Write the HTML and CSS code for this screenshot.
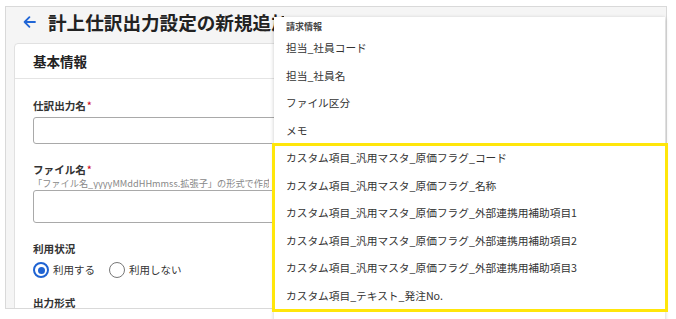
FILE: index.html
```html
<!DOCTYPE html>
<html lang="ja">
<head>
<meta charset="utf-8">
<link rel="stylesheet" href="styles.css">
</head>
<body>
<div class="frame">
  <div class="titlebar">
    <svg class="back" width="13" height="12" viewBox="0 0 13 12"><path d="M12 6H1.6M6.4 1.2L1.6 6L6.4 10.8" fill="none" stroke="#2166d6" stroke-width="1.8" stroke-linecap="round" stroke-linejoin="round"/></svg>
    <h1 class="title">計上仕訳出力設定の新規追加</h1>
  </div>
  <div class="card">
    <div class="card-head">基本情報</div>
    <div class="card-body">
      <div class="label lbl-first">仕訳出力名<span class="req">*</span></div>
      <div class="input input-a"></div>
      <div class="label lbl-gap">ファイル名<span class="req">*</span></div>
      <div class="hint">「ファイル名_yyyyMMddHHmmss.拡張子」の形式で作成</div>
      <div class="input input-b"></div>
      <div class="label lbl-gap">利用状況</div>
      <div class="radios">
        <span class="radio on"></span><span class="rlabel">利用する</span>
        <span class="radio"></span><span class="rlabel">利用しない</span>
      </div>
      <div class="label lbl-gap2">出力形式</div>
    </div>
  </div>
</div>

<div class="dropdown">
  <div class="dd-head">請求情報</div>
  <div class="dd-item">担当_社員コード</div>
  <div class="dd-item">担当_社員名</div>
  <div class="dd-item">ファイル区分</div>
  <div class="dd-item">メモ</div>
  <div class="dd-item">カスタム項目_汎用マスタ_原価フラグ_コード</div>
  <div class="dd-item">カスタム項目_汎用マスタ_原価フラグ_名称</div>
  <div class="dd-item">カスタム項目_汎用マスタ_原価フラグ_外部連携用補助項目1</div>
  <div class="dd-item">カスタム項目_汎用マスタ_原価フラグ_外部連携用補助項目2</div>
  <div class="dd-item">カスタム項目_汎用マスタ_原価フラグ_外部連携用補助項目3</div>
  <div class="dd-item">カスタム項目_テキスト_発注No.</div>
</div>
<div class="highlight"></div>
</body>
</html>
```
FILE: styles.css
```css
html, body {
  margin: 0;
  padding: 0;
  background: #fff;
}
body {
  width: 676px;
  height: 319px;
  position: relative;
  overflow: hidden;
  font-family: "Noto Sans CJK JP", "Noto Sans", sans-serif;
  color: #333;
}
.frame {
  position: absolute;
  left: 5px;
  top: 6px;
  width: 660px;
  height: 301px;
  border: 1px solid #d9d9d9;
  background: #f5f5f5;
  overflow: hidden;
}
.titlebar {
  height: 30px;
  display: flex;
  align-items: center;
  padding-left: 17px;
  gap: 12px;
}
.back {
  display: block;
  flex: none;
}
.title {
  margin: 0;
  width: 236px;
  overflow: hidden;
  font-size: 18.6px;
  font-weight: 700;
  line-height: 22px;
  color: #222;
  white-space: nowrap;
}
.card {
  margin: 6px 8px 0 8px;
  background: #fff;
  border: 1px solid #e1e1e1;
  border-radius: 4px;
}
.card-head {
  height: 34px;
  line-height: 34px;
  padding-left: 18px;
  font-size: 13.5px;
  font-weight: 700;
  color: #222;
  border-bottom: 1px solid #e4e4e4;
}
.card-body {
  padding: 0 18px 20px 18px;
}
.label {
  font-size: 10.6px;
  font-weight: 700;
  line-height: 14px;
  color: #333;
}
.lbl-first { margin-top: 19.5px; }
.lbl-gap { margin-top: 19.3px; }
.lbl-gap2 { margin-top: 18px; }
.req {
  color: #d0112b;
  font-size: 9px;
  vertical-align: top;
  margin-left: 1px;
}
.hint {
  width: 236px;
  overflow: hidden;
  font-size: 9.2px;
  line-height: 12px;
  color: #888;
  white-space: nowrap;
}
.input {
  width: 590px;
  box-sizing: border-box;
  border: 1px solid #a9a9a9;
  border-radius: 3px;
  background: #fff;
}
.input-a {
  margin-top: 4px;
  height: 27px;
}
.input-b {
  margin-top: 1px;
  height: 33px;
}
.radios {
  margin-top: 6px;
  height: 16px;
  display: flex;
  align-items: center;
}
.radio {
  width: 16px;
  height: 16px;
  box-sizing: border-box;
  border: 1.5px solid #777;
  border-radius: 50%;
  flex: none;
  position: relative;
}
.radio.on {
  border: 2px solid #1f63d2;
}
.radio.on::after {
  content: "";
  position: absolute;
  left: 2.5px;
  top: 2.5px;
  width: 7px;
  height: 7px;
  border-radius: 50%;
  background: #1f63d2;
}
.rlabel {
  font-size: 10.5px;
  line-height: 14px;
  color: #333;
  margin-left: 4px;
  margin-right: 14px;
}
.dropdown {
  position: absolute;
  left: 274px;
  top: 17px;
  width: 391px;
  height: 310px;
  background: #fff;
  box-shadow: 0 1px 4px rgba(0, 0, 0, 0.22);
}
.dd-head {
  padding: 3px 0 0 12px;
  font-size: 9px;
  font-weight: 700;
  line-height: 14px;
  color: #444;
}
.dd-item {
  height: 27.5px;
  line-height: 27.5px;
  padding-left: 12px;
  font-size: 10.7px;
  color: #333;
  white-space: nowrap;
}
.highlight {
  position: absolute;
  left: 272px;
  top: 143px;
  width: 396px;
  height: 169px;
  box-sizing: border-box;
  border: 3px solid #ffe60a;
}
```
